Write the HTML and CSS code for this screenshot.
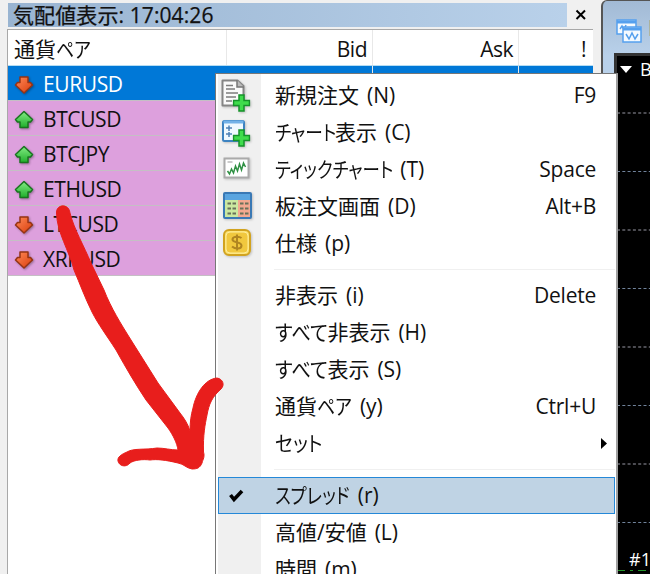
FILE: index.html
```html
<!DOCTYPE html>
<html lang="ja">
<head>
<meta charset="utf-8">
<title>気配値表示</title>
<link rel="stylesheet" href="styles.css">
</head>
<body>
<svg class="defs" width="0" height="0">
  <defs>
    <linearGradient id="gr" x1="0" y1="0" x2="0" y2="1"><stop offset="0" stop-color="#83ec83"/><stop offset="1" stop-color="#20ae2c"/></linearGradient>
    <linearGradient id="rd" x1="0" y1="0" x2="1" y2="1"><stop offset="0" stop-color="#ff8a58"/><stop offset="1" stop-color="#d93c0b"/></linearGradient>
    <symbol id="up" viewBox="0 0 20 20"><path d="M10 1.500L18.500 9.500L16.500 12H14V17.500H6V12H3.500L1.500 9.500Z" fill="url(#gr)" stroke="#18741f" stroke-width="1.500" stroke-linejoin="round"/></symbol>
    <symbol id="down" viewBox="0 0 20 20"><path d="M10 18L1.500 10L3.500 7.500H6V2H14V7.500H16.500L18.500 10Z" fill="url(#rd)" stroke="#963414" stroke-width="1.500" stroke-linejoin="round"/></symbol>
    <symbol id="plus" viewBox="0 0 18 18"><path d="M6.500 1H11.500V6.500H17V11.500H11.500V17H6.500V11.500H1V6.500H6.500Z" fill="#3fdc4c" stroke="#16922a" stroke-width="1.500"/></symbol>
  </defs>
</svg>
<div class="screen">
  <section class="watch">
    <header class="caption"><span class="caption-text">気配値表示: 17:04:26</span>
      <svg class="close" width="12" height="12" viewBox="0 0 12 12"><path d="M1.500 1.500L10 10M10 1.500L1.500 10" stroke="#000" stroke-width="2"/></svg>
    </header>
    <div class="table">
      <div class="row head"><span class="cell first">通貨<span class="kana pair">ペア</span></span><span class="cell bid">Bid</span><span class="cell ask">Ask</span><span class="cell last">!</span></div>
      <div class="row selected"><span class="cell first"><svg><use href="#down"/></svg>EURUSD</span><span class="cell"></span><span class="cell"></span><span class="cell"></span></div>
      <div class="row"><span class="cell first"><svg><use href="#up"/></svg>BTCUSD</span></div>
      <div class="row"><span class="cell first"><svg><use href="#up"/></svg>BTCJPY</span></div>
      <div class="row"><span class="cell first"><svg><use href="#up"/></svg>ETHUSD</span></div>
      <div class="row"><span class="cell first"><svg><use href="#down"/></svg>LTCUSD</span></div>
      <div class="row"><span class="cell first"><svg><use href="#down"/></svg>XRPUSD</span></div>
    </div>
  </section>
  <section class="chart">
    <header class="chart-title">
      <svg width="27" height="27" viewBox="0 0 27 27"><g fill="#f4faff" stroke="#55a0ee" stroke-width="1.500"><rect x="1" y="2" width="19" height="14"/><path d="M1 4H20" stroke-width="3"/><path d="M4 11l2-3 2 4 2-5" fill="none"/><rect x="7" y="9" width="18" height="15"/><path d="M7 11H25" stroke-width="3"/><path d="M10 16l3 5 3-6 3 6 3-5" fill="none"/></g></svg>
      <span>B</span>
    </header>
    <div class="plot">
      <div class="symbol-line"><svg width="12" height="7" viewBox="0 0 12 7"><path d="M0 0H12L6 7Z" fill="#fff"/></svg><b>B</b></div>
      <svg class="grid" width="33" height="518" viewBox="0 0 33 518"><path d="M0 57H33M0 174H33M0 291H33M0 408H33" stroke="#4c4c52" stroke-width="2" stroke-dasharray="3 2.300"/><path d="M0 115.500H33M0 232.500H33M0 349.500H33M0 466.500H33" stroke="#71839b" stroke-dasharray="3 2.300"/><path d="M0 514.500H33" stroke="#229528" stroke-dasharray="8 5 3 5"/></svg>
      <span class="order">#1</span>
    </div>
  </section>

  <nav class="menu">
    <div class="item"><svg class="icon" viewBox="0 0 30 34"><path d="M3.500 3.500H18.500L24.500 9V28.500H3.500Z" fill="#fafafa" stroke="#858585" stroke-width="2" stroke-linejoin="round"/><path d="M18 3V10H25" fill="#bbb" stroke="#777" stroke-width="1.500"/><path d="M7 8.500H14M7 12H16M7 16H19M7 20H17M7 24H13" stroke="#7e7e7e" stroke-width="1.500"/><use href="#plus" x="13.500" y="17" width="18" height="18"/></svg><span class="label">新規注文 (N)</span><kbd>F9</kbd></div>
    <div class="item"><svg class="icon" viewBox="0 0 30 34"><rect x="4" y="7" width="21" height="20" rx="1.500" fill="#eff9ff" stroke="#3d83c1" stroke-width="2"/><path d="M4.500 8H24.500" stroke="#73b2e8" stroke-width="3"/><path d="M7 14H13M10 11.500V17M7 20H13M10 18V23" stroke="#4f81b6" stroke-width="1.500"/><use href="#plus" x="13.500" y="15" width="18" height="18"/></svg><span class="label"><span class="kana chart-word">チャート</span>表示 (C)</span></div>
    <div class="item"><svg class="icon" viewBox="0 0 30 34"><rect x="5.500" y="7.500" width="24" height="19" fill="#fff" stroke="#aaa" stroke-width="2"/><path d="M8.500 11H13.500" stroke="#999"/><path d="M8.500 20L10.500 23L12.500 18L14.500 22L16.500 15L18.500 20L20.500 13L22.500 19L24.500 12L26.500 16" fill="none" stroke="#309144" stroke-width="1.500"/></svg><span class="label"><span class="kana tick">ティックチャート</span> (T)</span><kbd>Space</kbd></div>
    <div class="item"><svg class="icon" viewBox="0 0 30 34"><rect x="5" y="5" width="27" height="25" rx="1" fill="#cbe8a0" stroke="#3a79b5" stroke-width="2"/><path d="M6 6H31V12H6Z" fill="#5aa5e0"/><path d="M19 12H31V29H19Z" fill="#f2a990"/><path d="M8.500 15.500H17M8.500 20.500H17M8.500 25.500H17M21 15.500H30M21 20.500H30M21 25.500H30" stroke="#697159" stroke-width="2" stroke-dasharray="3.500 1.500"/></svg><span class="label">板注文画面 (D)</span><kbd>Alt+B</kbd></div>
    <div class="item"><svg class="icon" viewBox="0 0 30 34"><rect x="5" y="5" width="26" height="25" rx="5" fill="#fae06c" stroke="#d2a31f" stroke-width="2"/><rect x="7" y="7" width="22" height="21" rx="4" fill="#f1c83e" stroke="#ffed9b"/><path d="M22.500 13C20 11 13.500 11 13.500 14.500S22.500 16.500 22.500 20.500S16 24 13 21.500M18 9.500V25.500" fill="none" stroke="#b08521" stroke-width="2"/></svg><span class="label">仕様 (p)</span></div>
    <hr>
    <div class="item"><span class="label">非表示 (i)</span><kbd>Delete</kbd></div>
    <div class="item"><span class="label"><span class="kana all">すべて</span>非表示 (H)</span></div>
    <div class="item"><span class="label"><span class="kana all">すべて</span>表示 (S)</span></div>
    <div class="item"><span class="label">通貨<span class="kana pair">ペア</span> (y)</span><kbd>Ctrl+U</kbd></div>
    <div class="item"><span class="label"><span class="kana set">セット</span></span><svg class="more" width="6" height="11" viewBox="0 0 6 11"><path d="M0 0L6 5.500L0 11Z"/></svg></div>
    <hr>
    <div class="item active"><svg class="check" width="15" height="14" viewBox="0 0 15 14"><path d="M1.500 6L5 10.500L13 2" fill="none" stroke="#000" stroke-width="3.600"/></svg><span class="label"><span class="kana spread">スプレッド</span> (r)</span></div>
    <div class="item"><span class="label">高値/安値 (L)</span></div>
    <div class="item"><span class="label">時間 (m)</span></div>
  </nav>
  <svg class="arrow" width="650" height="574" viewBox="0 0 650 574"><path d="M56.500 213C56 204 69 203 70 213C74 229 84 246 91 263L104 290C111 308 121 324 131 340L158 383C165 393 173 403 180 413C184 418 188 424 190 431C190 422 191 415 193 408C196 393 205 379 217 378C223 379 225 385 221 389C212 397 209 404 207 415C205 425 203 435 203.500 452C205 457 203 459 202 463C200 468 197 469 192 469C186 468 184 464 178 463C166 460 157 459 150 460C143 459 134 460 130 463C126 468 119 466 118 461C117 457 122 454 127 452C133 448 145 450 157 448C164 448 171 450 178 450C177 443 173 435 168 428L146 400C136 385 126 368 116 350C107 336 98 324 92 312C85 298 80 284 74 270C69 250 57 233 56.500 213Z" fill="#e81e1c" stroke="#e81e1c"/></svg>
</div>
</body>
</html>
```
FILE: styles.css
```css
* { box-sizing: border-box; }
body { margin: 0; overflow: hidden; font: 21px/1 "Open Sans", "Noto Sans CJK JP", sans-serif; color: #111; }
.defs { position: absolute; }
.screen { position: relative; display: flex; width: 650px; height: 574px; overflow: hidden; background: #f0f0f0; }
.watch { width: 601px; flex: none; padding: 3px 8px 0 7px; }
.caption { display: flex; align-items: center; justify-content: space-between; height: 24px; margin-right: 6px; margin-left: 1px; background: linear-gradient(90deg, #99b4d1, #b9d1ea 96.500%, #f0f0f0 96.500%); }
.caption-text { padding-left: 5px; letter-spacing: 0.100px; line-height: 24px; -webkit-text-stroke: 0.250px #111; }
.close { margin-right: 0; }
.table { height: 547px; margin-top: 2px; border: solid #a8a8a8; border-width: 1px 0 0 1px; background: #fff; }
.row { display: grid; grid-template-columns: 219px 146px 146px 1fr; height: 35px; border-bottom: 1px solid #c4bfc4; background: #dda0dd; }
.head { height: 36px; background: #fff; border-color: #b5ddf3; }
.selected { background: #0078d7; color: #fff; }
.cell { display: flex; align-items: center; justify-content: flex-end; padding: 3px 5px 0 0; border-right: 1px solid #e8e8e8; letter-spacing: -0.500px; }
.cell:last-child { border: 0; padding-right: 7px; }
.row .first { justify-content: flex-start; padding: 3px 0 0 6px; }
.row:not(.head) .first { border: 0; letter-spacing: -0.400px; }
.selected .first { border-right: 1px solid #d5e3ef; }
.row:not(.head) .first svg { width: 20px; height: 20px; margin-right: 9px; filter: drop-shadow(1px 1px 1px #0005); }
.head .first { letter-spacing: 0; }
.chart { flex: 1; padding-left: 3px; background: linear-gradient(#a2bad5, #b9d1ea 55px); border-left: 2px solid #555; border-top: 1px solid #555; border-top-left-radius: 6px; }
.chart-title { display: flex; height: 52px; padding: 17px 0 0 10px; gap: 5px; }
.chart-title svg, .chart-title span { flex: none; }
.plot { position: relative; height: 521px; margin-left: 8px; border: solid #333; border-width: 3px 0 0 3px; background: #000; color: #fff; }
.symbol-line { display: flex; align-items: center; gap: 8px; padding: 3px 0 0 3px; font: 18px/20px "Open Sans", sans-serif; }
.symbol-line svg { flex: none; }
.symbol-line b { font-weight: 400; }
.grid { position: absolute; left: 0; top: 0; }
.order { position: absolute; left: 12px; top: 493px; font: 18px/20px "Open Sans", sans-serif; white-space: nowrap; }
.menu { position: absolute; left: 215px; top: 73px; width: 403px; height: 520px; padding: 3px 1px 3px 2px; border: 1px solid #777; border-right: 2px solid #a0a0a0; background: linear-gradient(90deg, #fff 2px, #f0f0f0 2px, #f0f0f0 45px, #fff 45px); }
.item { position: relative; display: flex; align-items: center; height: 37px; padding: 0 19px 0 57px; white-space: nowrap; }
.label { word-spacing: 2.500px; }
.kana { display: inline-block; font-feature-settings: "palt"; transform-origin: left; }
.chart-word { transform: scaleX(0.840); margin-right: -13px; }
.tick { transform: scaleX(0.830); margin-right: -25px; }
.all { transform: scaleX(0.920); margin-right: -5px; }
.pair { transform: scaleX(0.850); margin-right: -6px; }
.set { transform: scaleX(0.900); margin-right: -5px; }
.spread { transform: scaleX(0.830); margin-right: -15px; }
kbd { margin-left: auto; font: inherit; letter-spacing: -0.250px; }
.icon { position: absolute; left: 1px; top: 0; width: 30px; height: 34px; overflow: visible; filter: drop-shadow(1px 1px 1px #0003); }
hr { height: 1px; margin: 7px 0 7px 56px; border: 0; background: #f0f0f0; }
.active { background: #bfd3e4; border: 1px solid #2488d8; padding-left: 56px; }
.check { position: absolute; left: 10px; top: 11px; }
.more { margin-left: auto; margin-right: -11px; }
.arrow { position: absolute; left: 0; top: 0; }
```
